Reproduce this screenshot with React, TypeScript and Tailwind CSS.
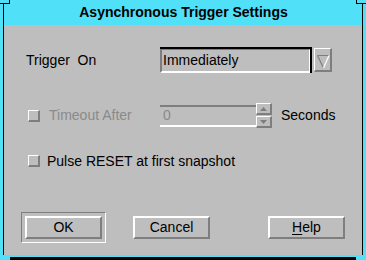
const raised = "border-t border-l border-t-white border-l-white border-b-2 border-r-2 border-b-[#7e7e7e] border-r-[#7e7e7e]";

export default function App() {
  return (
    <div className="relative flex h-[260px] w-[366px] flex-col bg-[#50e0f8] pt-[4px] font-['Liberation_Sans',Arial,sans-serif] text-[14px] text-black">
      <div className="mx-[3px] flex h-[251px] flex-col border-x border-black">
        <div className="flex h-[21px] items-center justify-center pb-[4px] pl-px font-bold">Asynchronous Trigger Settings</div>
        <div className="flex h-[230px] flex-col bg-[#bebebe] pt-[22px]">
          <div className="flex h-[26px] items-center">
            <div className="w-[156px] whitespace-pre pl-[22px]">Trigger  On</div>
            <div className="flex h-[26px] w-[152px] border-t-2 border-r-2 border-black">
              <div className="flex flex-1 items-center border-t border-l-2 border-t-[#7e7e7e] border-l-[#7e7e7e] border-b-2 border-r border-b-white border-r-white pl-px">
                Immediately
              </div>
            </div>
            <div className={`ml-[2px] h-[24px] w-[18px] ${raised}`}>
              <svg width="15" height="21" viewBox="0 0 15 21">
                <path d="M2.5 6.5 H14" stroke="#7e7e7e" strokeWidth="1" />
                <path d="M2.5 6.5 L8.5 19" stroke="#7e7e7e" strokeWidth="1.2" />
                <path d="M14 6.5 L8.5 19" stroke="#ffffff" strokeWidth="1.2" />
              </svg>
            </div>
          </div>

          <div className="mt-[30px] flex h-[25px] items-center">
            <div className="flex w-[156px] items-center pl-[24px]">
              <div className={`h-[12px] w-[12px] ${raised}`} />
              <span className="ml-[9px] text-[#8a8a8a]">Timeout After</span>
            </div>
            <div className="flex h-[22px] w-[96px] items-center border-y-2 border-t-[#7e7e7e] border-b-white pl-[3px] text-[#8a8a8a]">0</div>
            <div className="flex w-[16px] flex-col">
              <div className={`flex h-[12px] items-center justify-center ${raised}`}>
                <svg width="7" height="4" viewBox="0 0 7 4"><path d="M0 4 L3.5 0 L7 4 Z" fill="#7e7e7e" /></svg>
              </div>
              <div className={`mt-px flex h-[12px] items-center justify-center ${raised}`}>
                <svg width="7" height="4" viewBox="0 0 7 4"><path d="M0 0 L3.5 4 L7 0 Z" fill="#7e7e7e" /></svg>
              </div>
            </div>
            <span className="ml-[9px]">Seconds</span>
          </div>

          <div className="mt-[26px] flex h-[14px] items-center pl-[24px]">
            <div className={`h-[12px] w-[12px] ${raised}`} />
            <span className="ml-[7px]">Pulse RESET at first snapshot</span>
          </div>

          <div className="mt-[44px] flex items-center pl-[17px]">
            <div className="flex h-[31px] w-[85px] items-center justify-center border border-t-[#7e7e7e] border-l-[#7e7e7e] border-b-white border-r-white">
              <Button>OK</Button>
            </div>
            <div className="ml-[27px]">
              <Button>Cancel</Button>
            </div>
            <div className="ml-[58px]">
              <Button>
                <span className="underline underline-offset-2">H</span>elp
              </Button>
            </div>
          </div>
        </div>
      </div>
      <div className="mx-[10px] mt-[2px] h-[3px] bg-black" />

      <div className="absolute left-0 top-[3px] h-px w-[10px] bg-black" />
      <div className="absolute left-[9px] top-0 h-[3px] w-px bg-black" />
      <div className="absolute right-0 top-[3px] h-px w-[10px] bg-black" />
      <div className="absolute right-[9px] top-0 h-[3px] w-px bg-black" />
    </div>
  );
}

function Button({ children }: { children: React.ReactNode }) {
  return (
    <div className="flex h-[23px] w-[77px] items-center justify-center border-2 border-t-white border-l-white border-b-[#7e7e7e] border-r-[#7e7e7e]">
      <span>{children}</span>
    </div>
  );
}
